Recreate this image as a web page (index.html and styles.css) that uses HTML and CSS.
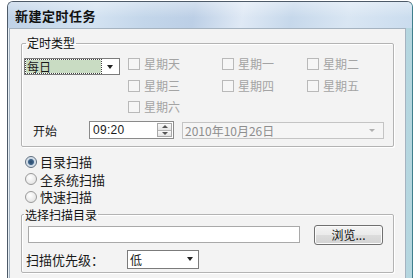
FILE: index.html
```html
<!DOCTYPE html>
<html lang="zh-CN">
<head>
    <meta charset="UTF-8">
    <title>新建定时任务</title>
    <link rel="stylesheet" href="styles.css">
</head>
<body>

    <div class="window">
        <div class="titlebar">
            <span class="title">新建定时任务</span>
        </div>

        <div class="client">

            <fieldset class="group group-type">
                <legend>定时类型</legend>

                <div class="type-grid">
                    <div class="combo combo-type">
                        <span class="combo-value selected">每日</span>
                        <span class="combo-arrow"></span>
                    </div>
                    <label class="check disabled"><span class="box"></span>星期天</label>
                    <label class="check disabled"><span class="box"></span>星期一</label>
                    <label class="check disabled"><span class="box"></span>星期二</label>

                    <span></span>
                    <label class="check disabled"><span class="box"></span>星期三</label>
                    <label class="check disabled"><span class="box"></span>星期四</label>
                    <label class="check disabled"><span class="box"></span>星期五</label>

                    <span></span>
                    <label class="check disabled"><span class="box"></span>星期六</label>
                </div>

                <div class="start-row">
                    <span class="start-label">开始</span>
                    <div class="spin">
                        <span class="spin-value">09:20</span>
                        <span class="spin-btns">
                            <span class="spin-btn up"></span>
                            <span class="spin-btn down"></span>
                        </span>
                    </div>
                    <div class="date disabled">
                        <span>2010年10月26日</span>
                        <span class="date-arrow"></span>
                    </div>
                </div>
            </fieldset>

            <div class="radios">
                <label class="radio checked"><span class="dot"></span>目录扫描</label>
                <label class="radio"><span class="dot"></span>全系统扫描</label>
                <label class="radio"><span class="dot"></span>快速扫描</label>
            </div>

            <fieldset class="group group-dir">
                <legend>选择扫描目录</legend>

                <div class="dir-row">
                    <div class="textbox"></div>
                    <button class="btn" type="button">浏览...</button>
                </div>

                <div class="prio-row">
                    <span class="prio-label">扫描优先级：</span>
                    <div class="combo combo-prio">
                        <span class="combo-value">低</span>
                        <span class="combo-arrow"></span>
                    </div>
                </div>
            </fieldset>

        </div>
    </div>

</body>
</html>
```

FILE: styles.css
```css
body {
  margin: 0;
  background: #ffffff;
  font-family: "Liberation Sans", "Noto Sans CJK SC", sans-serif;
  font-size: 12px;
  color: #1a1a1a;
  overflow: hidden;
}

/* window frame */
.window {
  display: flex;
  flex-direction: column;
  margin: 1px 0 0 7px;
  width: 404px;
  height: 277px;
  border: 1px solid #4d5a68;
  border-right-color: #3f7f8c;
  border-bottom: none;
  border-radius: 6px 6px 0 0;
  background: linear-gradient(90deg, #c9dbe9 0%, #d6e6f1 70%, #b4d6df 100%);
  overflow: hidden;
}

.titlebar {
  flex: none;
  height: 26px;
  display: flex;
  align-items: center;
  padding-left: 7px;
  background:
    linear-gradient(180deg, rgba(255,255,255,0.35) 0%, rgba(255,255,255,0) 60%),
    linear-gradient(100deg, #bfd2e7 0%, #d3e2f1 22%, #c3d6ea 34%, #bccfe6 46%, #dfe9f5 58%, #c6d8eb 70%, #d9e6f3 84%, #cadcee 100%);
}

.title {
  font-family: "Noto Sans CJK SC", sans-serif;
  font-weight: bold;
  font-size: 13px;
  letter-spacing: 0.5px;
  color: #111;
}

.client {
  flex: 1;
  margin: 0 6px 0 1px;
  border: 1px solid #a5b3c0;
  border-bottom: none;
  background: #f3f3f3;
  box-sizing: border-box;
  padding-top: 7px;
  box-shadow: -1px 0 0 #e9f0f6;
}

/* group boxes */
.group {
  margin: 0 11px;
  border: 1px solid #b3b3b3;
  box-shadow: inset 1px 1px 0 #ffffff, 1px 1px 0 #ffffff;
  border-radius: 2px;
  padding: 0;
  min-width: 0;
}

.group legend {
  padding: 0 1px;
  margin-left: 2px;
  line-height: 14px;
  font-family: "Noto Sans CJK SC", sans-serif;
  font-size: 12px;
  color: #111;
}

.group-type {
  padding: 8px 0 7px 2px;
}

.type-grid {
  display: grid;
  grid-template-columns: 104px 94px 85px 1fr;
  grid-template-rows: 17px 21px 21px;
  align-items: center;
}

/* combos */
.combo {
  display: flex;
  align-items: center;
  height: 17px;
  border: 1px solid #7b7b7b;
  background: #ffffff;
  box-sizing: border-box;
}

.combo-type {
  width: 96px;
}

.combo-value {
  font-family: "Noto Sans CJK SC", sans-serif;
  line-height: 13px;
  padding: 0 2px;
  flex: 1;
}

.combo-value.selected {
  flex: none;
  width: 75px;
  height: 13px;
  margin-left: 1px;
  background: #c9dcc3;
  outline: 1px dotted #444;
  box-sizing: border-box;
  padding-left: 1px;
  line-height: 13px;
}

.combo-arrow {
  width: 0;
  height: 0;
  margin: 0 5px 0 auto;
  border-left: 3px solid transparent;
  border-right: 3px solid transparent;
  border-top: 4px solid #222;
}

.combo-type .combo-arrow {
  margin-right: 6px;
}

.combo-prio {
  width: 72px;
  height: 19px;
}

/* checkboxes */
.check {
  display: flex;
  align-items: center;
  font-family: "Noto Sans CJK SC", sans-serif;
  line-height: 14px;
}

.check.disabled {
  color: #a4a4a4;
}

.check .box {
  width: 12px;
  height: 12px;
  margin-right: 4px;
  border: 1px solid #b9b9b9;
  background: #f6f6f6;
  box-sizing: border-box;
}

.type-grid .check:nth-child(2),
.type-grid .check:nth-child(3),
.type-grid .check:nth-child(4) {
  align-self: start;
  margin-top: -1px;
}

/* start row */
.start-row {
  display: flex;
  align-items: center;
  padding-left: 9px;
  margin-top: 4px;
}

.start-label {
  width: 56px;
  font-family: "Noto Sans CJK SC", sans-serif;
}

.spin {
  display: flex;
  align-items: center;
  width: 85px;
  height: 18px;
  border: 1px solid #8a8a8a;
  background: #ffffff;
  box-sizing: border-box;
}

.spin-value {
  flex: 1;
  padding-left: 3px;
  letter-spacing: 0.3px;
}

.spin-btns {
  display: flex;
  flex-direction: column;
  width: 15px;
  height: 14px;
  margin-right: 1px;
  border: 1px solid #a8a8a8;
  box-sizing: border-box;
}

.spin-btn {
  flex: 1;
  display: flex;
  align-items: center;
  justify-content: center;
  background: linear-gradient(180deg, #fafafa, #e4e4e4);
}

.spin-btn.up {
  border-bottom: 1px solid #b5b5b5;
}

.spin-btn::after {
  content: "";
  border-left: 3px solid transparent;
  border-right: 3px solid transparent;
}

.spin-btn.up::after {
  border-bottom: 3px solid #555;
}

.spin-btn.down::after {
  border-top: 3px solid #555;
}

.date {
  display: flex;
  align-items: center;
  justify-content: space-between;
  width: 202px;
  height: 17px;
  margin-left: 8px;
  padding: 0 8px 0 2px;
  border: 1px solid #c4c4c4;
  background: #f5f5f5;
  box-sizing: border-box;
  color: #8e8e8e;
  font-family: "Noto Sans CJK SC", sans-serif;
  line-height: 13px;
}

.date-arrow {
  border-left: 3px solid transparent;
  border-right: 3px solid transparent;
  border-top: 3px solid #b0b0b0;
}

/* radios */
.radios {
  margin: 6px 0 0 15px;
}

.radio {
  display: flex;
  align-items: center;
  height: 17.5px;
  font-family: "Noto Sans CJK SC", sans-serif;
  font-size: 13px;
}

.radio .dot {
  width: 12px;
  height: 12px;
  margin-right: 3px;
  border: 1px solid #9a9a9a;
  border-radius: 50%;
  background: radial-gradient(circle at 40% 35%, #ffffff, #dcdcdc);
  box-sizing: border-box;
}

.radio.checked .dot {
  border-color: #5f6f80;
  background: radial-gradient(circle at 50% 50%, #2c4a6c 0, #3e6388 2.5px, #c9d6e3 3.5px, #eef2f6 6px);
}

/* directory group */
.group-dir {
  margin-top: 2px;
  padding: 3px 0 3px 0;
}

.dir-row {
  display: flex;
  align-items: center;
  padding-left: 6px;
}

.textbox {
  width: 272px;
  height: 17px;
  border: 1px solid #a9a9a9;
  background: #ffffff;
  box-sizing: border-box;
}

.btn {
  width: 69px;
  height: 20px;
  margin-left: 14px;
  padding: 0;
  border: 1px solid #707070;
  border-radius: 3px;
  background: linear-gradient(180deg, #f4f4f4 0%, #ebebeb 48%, #dcdcdc 52%, #d3d3d3 100%);
  box-shadow: inset 0 0 0 1px #fbfbfb;
  font-family: "Noto Sans CJK SC", sans-serif;
  font-size: 12px;
  color: #111;
}

.prio-row {
  display: flex;
  align-items: center;
  margin-top: 5px;
  padding-left: 4px;
}

.prio-label {
  width: 101px;
  font-family: "Noto Sans CJK SC", sans-serif;
  font-size: 13px;
}
```
